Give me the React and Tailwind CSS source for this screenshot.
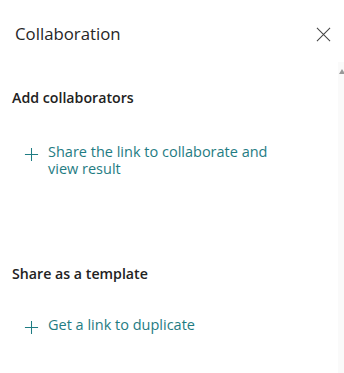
function PlusIcon() {
    return (
        <svg viewBox="0 0 16 16" className="mt-[4px] h-[15px] w-[15px] shrink-0" fill="none" stroke="currentColor" strokeWidth="1.1">
            <path d="M8 1v14M1 8h14" />
        </svg>
    );
}

function CloseIcon() {
    return (
        <svg viewBox="0 0 16 16" className="h-[15px] w-[15px] text-[#444]" fill="none" stroke="currentColor" strokeWidth="1.1">
            <path d="M1 1l14 14M15 1L1 15" />
        </svg>
    );
}

function ActionLink({ children }) {
    return (
        <button className="flex items-start gap-[9px] pl-[24px] text-left text-[14.5px] leading-[17px] text-[#1f7c83]">
            <PlusIcon />
            <span className="w-[240px]">{children}</span>
        </button>
    );
}

export default function App() {
    return (
        <div
            className="relative h-[373px] w-[344px] overflow-hidden bg-white"
            style={{ fontFamily: '"Open Sans", "Noto Sans", sans-serif' }}
        >
            {/* header */}
            <div className="flex items-center justify-between pl-[15px] pr-[13px] pt-[22px]">
                <h1 className="text-[16.8px] leading-[24px] text-[#262626]">Collaboration</h1>
                <CloseIcon />
            </div>

            {/* scrollbar */}
            <div className="absolute right-0 top-[62px] bottom-0 w-[6px] bg-[#fafafa]">
                <div className="ml-[1px] mt-[7px] h-0 w-0 border-x-[3px] border-b-[5px] border-x-transparent border-b-[#999]" />
            </div>

            <div className="pl-[12px] pt-[43px]">
                <h2 className="text-[14.2px] font-semibold leading-[18px] text-[#222]">Add collaborators</h2>
            </div>
            <div className="pt-[36px]">
                <ActionLink>Share the link to collaborate and view result</ActionLink>
            </div>

            <div className="pl-[12px] pt-[88px]">
                <h2 className="text-[14.2px] font-semibold leading-[18px] text-[#222]">Share as a template</h2>
            </div>
            <div className="pt-[33px]">
                <ActionLink>Get a link to duplicate</ActionLink>
            </div>
        </div>
    );
}
